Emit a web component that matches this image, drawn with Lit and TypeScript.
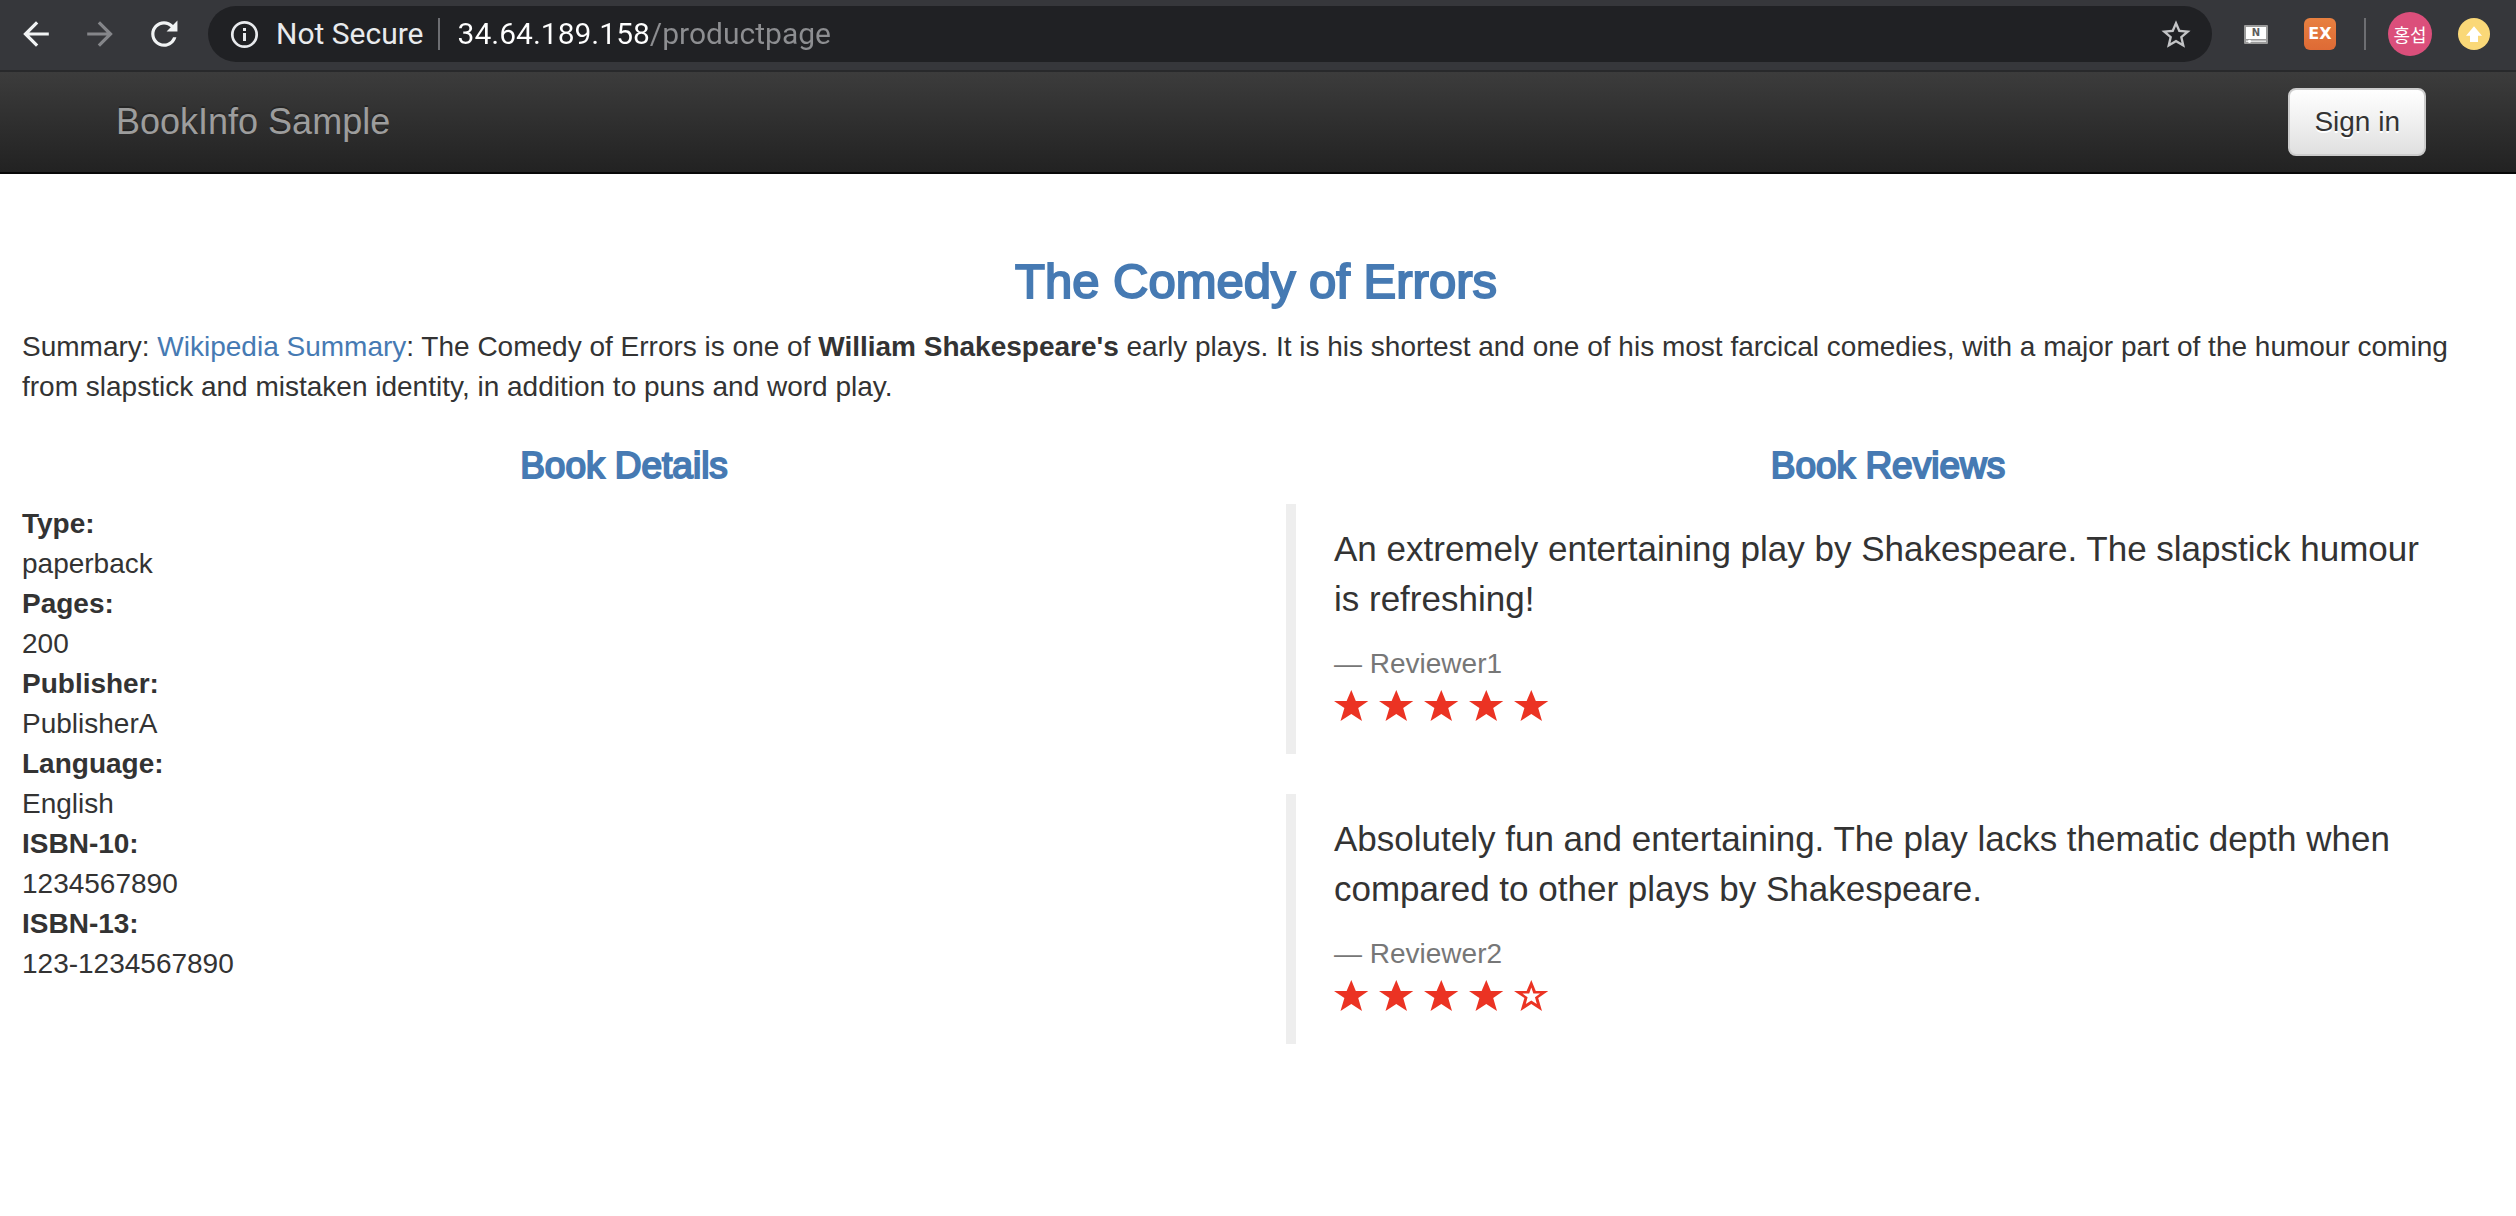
import { LitElement, html, svg, css } from "lit";
import { customElement, property } from "lit/decorators.js";

const details: [string, string][] = [
  ["Type:", "paperback"],
  ["Pages:", "200"],
  ["Publisher:", "PublisherA"],
  ["Language:", "English"],
  ["ISBN-10:", "1234567890"],
  ["ISBN-13:", "123-1234567890"],
];

const reviews = [
  {
    text: "An extremely entertaining play by Shakespeare. The slapstick humour is refreshing!",
    author: "Reviewer1",
    stars: 5,
  },
  {
    text: "Absolutely fun and entertaining. The play lacks thematic depth when compared to other plays by Shakespeare.",
    author: "Reviewer2",
    stars: 4,
  },
];

@customElement("browser-toolbar")
class BrowserToolbar extends LitElement {
  static styles = css`
    :host {
      display: block;
    }
    .bar {
      display: flex;
      align-items: center;
      height: 68px;
      padding: 0 26px 2px 20px;
      background: #36373b;
      border-bottom: 2px solid #28292b;
      font-family: Roboto, "Liberation Sans", sans-serif;
    }
    button {
      display: flex;
      align-items: center;
      justify-content: center;
      flex: none;
      padding: 0;
      border: 0;
      background: none;
    }
    svg {
      display: block;
    }
    .nav {
      display: flex;
      gap: 32px;
      margin-right: 28px;
      fill: #f1f3f4;
    }
    .nav button:disabled {
      fill: #85868a;
    }
    .pill {
      display: flex;
      align-items: center;
      flex: 1;
      min-width: 0;
      height: 56px;
      padding: 0 20px;
      border-radius: 28px;
      background: #202124;
    }
    .security {
      display: flex;
      align-items: center;
      gap: 16px;
      color: #e8eaed;
      font: inherit;
      font-size: 30px;
      line-height: 32px;
    }
    .divider {
      width: 2px;
      height: 32px;
      background: #6d6e72;
    }
    .pill .divider {
      margin: 0 18px 0 14px;
    }
    .address {
      flex: 1;
      min-width: 0;
      padding: 0;
      border: 0;
      outline: 0;
      color: #fff;
      font: inherit;
      font-size: 30px;
      line-height: 32px;
      background: linear-gradient(90deg, #fff 192px, #8d8e91 192px);
      -webkit-background-clip: text;
      background-clip: text;
      -webkit-text-fill-color: transparent;
    }
    .bookmark {
      fill: #c3c4c6;
    }
    .extensions {
      display: flex;
      gap: 32px;
      margin: 0 28px;
    }
    .n-label {
      fill: #5d5d5d;
      font: bold 10px "DejaVu Sans", sans-serif;
      text-anchor: middle;
    }
    .ex {
      width: 32px;
      height: 32px;
      border-radius: 6px;
      background: linear-gradient(#e88040, #de6a35);
      color: #fff;
      font: bold 16px/32px "DejaVu Sans", sans-serif;
    }
    .avatar {
      width: 44px;
      height: 44px;
      margin: 0 26px 0 22px;
      border-radius: 22px;
      background: #db4f7b;
      color: #fff;
      font: 18px/24px "Noto Sans CJK KR", sans-serif;
      white-space: nowrap;
    }
  `;

  render() {
    return html`
      <header class="bar">
        <div class="nav">
          <button aria-label="Back">
            <svg width="32" height="32" viewBox="2 2 20 20">
              <path d="M20 11H7.83l5.59-5.59L12 4l-8 8 8 8 1.41-1.41L7.83 13H20v-2z" />
            </svg>
          </button>
          <button aria-label="Forward" disabled>
            <svg width="32" height="32" viewBox="2 2 20 20">
              <path d="M12 4l-1.41 1.41L16.17 11H4v2h12.17l-5.58 5.59L12 20l8-8z" />
            </svg>
          </button>
          <button aria-label="Reload">
            <svg width="32" height="32" viewBox="2 2 20 20">
              <path
                d="M17.65 6.35C16.2 4.9 14.21 4 12 4c-4.42 0-7.99 3.58-7.99 8s3.57 8 7.99 8c3.73 0 6.84-2.55 7.73-6h-2.08c-.82 2.33-3.04 4-5.65 4-3.31 0-6-2.69-6-6s2.69-6 6-6c1.66 0 3.14.69 4.22 1.78L13.6 10.4H20.4V3.6l-2.75 2.75z"
              />
            </svg>
          </button>
        </div>
        <div class="pill">
          <button class="security">
            <svg width="32" height="32" viewBox="0 0 32 32" fill="#e8eaed">
              <circle cx="16.5" cy="16.5" r="12.2" fill="none" stroke="#e8eaed" stroke-width="2.7" />
              <rect x="15" y="10" width="3" height="3" />
              <rect x="15" y="15" width="3" height="8" />
            </svg>
            <span>Not Secure</span>
          </button>
          <span class="divider"></span>
          <input class="address" type="text" aria-label="Address" value="34.64.189.158/productpage" />
          <button class="bookmark" aria-label="Bookmark">
            <svg width="32" height="32" viewBox="1 0.5 22 22">
              <path
                d="M22 9.24l-7.19-.62L12 2 9.19 8.63 2 9.24l5.46 4.73L5.82 21 12 17.27 18.18 21l-1.63-7.03L22 9.24zM12 15.4l-3.76 2.27 1-4.28-3.32-2.88 4.38-.38L12 6.1l1.71 4.04 4.38.38-3.32 2.88 1 4.28L12 15.4z"
              />
            </svg>
          </button>
        </div>
        <div class="extensions">
          <button aria-label="N extension">
            <svg width="32" height="32" viewBox="0 0 32 32">
              <rect x="4" y="7" width="24" height="19" rx="1" fill="#9b9b9b" />
              <rect x="6" y="9" width="20" height="12" fill="#fff" />
              <rect x="6" y="22.5" width="20" height="1.5" fill="#e3e3e3" />
              <circle cx="9.5" cy="23.3" r="1.6" fill="#fff" />
              <text class="n-label" x="16" y="18">N</text>
            </svg>
          </button>
          <button class="ex">EX</button>
        </div>
        <span class="divider"></span>
        <button class="avatar">홍섭</button>
        <button aria-label="Update">
          <svg width="32" height="32" viewBox="0 0 32 32">
            <circle cx="16" cy="16" r="16" fill="#fad878" />
            <path d="M16 8.3L24 17.8H20V24H12V17.8H8z" fill="#fff" />
          </svg>
        </button>
      </header>
    `;
  }
}

@customElement("star-rating")
class StarRating extends LitElement {
  @property({ type: Number }) value = 0;

  static styles = css`
    :host {
      display: block;
    }
    .stars {
      display: flex;
      gap: 10px;
      padding: 6px 0 9px;
      fill: #eb3323;
    }
    svg {
      display: block;
    }
  `;

  render() {
    const outer =
      "M17.3 0L21.8 11H34.3L24.2 17.9L28 31L17.3 24L6.5 31L10.4 17.9L0 11H12.6Z";
    const hole =
      "M17.3 7.6L15.2 13.6H8.5L13.6 17.3L11.8 24L17.3 20.4L22.8 24L21 17.3L26.1 13.6H19.4Z";
    return html`
      <div class="stars" role="img" aria-label="${this.value} of 5 stars">
        ${[1, 2, 3, 4, 5].map(
          (n) => html`
            <svg width="35" height="35" viewBox="0 0 35 35">
              ${svg`<path fill-rule="evenodd" d=${n <= this.value ? outer : outer + hole} />`}
            </svg>
          `
        )}
      </div>
    `;
  }
}

@customElement("app-root")
class AppRoot extends LitElement {
  static styles = css`
    :host {
      display: block;
      min-height: 100vh;
      background: #fff;
      color: #333;
      font: 28px/40px "Liberation Sans", Arial, sans-serif;
    }
    a {
      color: #467ab3;
      text-decoration: none;
    }
    .navbar {
      display: flex;
      align-items: center;
      justify-content: space-between;
      height: 100px;
      padding: 0 90px 0 116px;
      background: linear-gradient(#3c3c3c, #222);
      border-bottom: 2px solid #080808;
    }
    .brand {
      color: #9d9d9d;
      font-size: 36px;
      text-shadow: 0 -2px 0 rgba(0, 0, 0, 0.25);
    }
    .signin {
      padding: 12px 24px;
      border: 2px solid #ccc;
      border-radius: 8px;
      background: linear-gradient(#fff, #e0e0e0);
      color: #333;
      font: inherit;
      text-shadow: 0 2px 0 #fff;
    }
    .intro {
      padding: 79px 26px 0 22px;
    }
    h1,
    h2 {
      margin: 0;
      color: #467ab3;
      font-weight: 500;
      text-align: center;
      -webkit-text-stroke: 2px #467ab3;
    }
    h1 {
      font-size: 49px;
      line-height: 56px;
    }
    h2 {
      margin-bottom: 18px;
      font-size: 37px;
      line-height: 40px;
    }
    .summary {
      margin: 18px 0 39px;
    }
    .columns {
      display: grid;
      grid-template-columns: 1fr 1fr;
      gap: 60px;
      padding: 0 26px 40px 22px;
    }
    dl,
    dd {
      margin: 0;
    }
    dt {
      font-weight: bold;
    }
    blockquote {
      margin: 0 0 40px;
      padding: 20px 40px 20px 38px;
      border-left: 10px solid #eee;
      font-size: 35px;
      line-height: 50px;
    }
    blockquote p {
      margin: 0 0 20px;
    }
    .author {
      display: block;
      color: #777;
      font-size: 28px;
      line-height: 40px;
    }
  `;

  render() {
    return html`
      <browser-toolbar></browser-toolbar>
      <nav class="navbar">
        <a class="brand" href="#">BookInfo Sample</a>
        <button class="signin">Sign in</button>
      </nav>
      <main>
        <section class="intro">
          <h1><a href="#">The Comedy of Errors</a></h1>
          <p class="summary">
            Summary: <a href="#">Wikipedia Summary</a>: The Comedy of Errors is one of
            <b>William Shakespeare's</b> early plays. It is his shortest and one of his most
            farcical comedies, with a major part of the humour coming from slapstick and mistaken
            identity, in addition to puns and word play.
          </p>
        </section>
        <div class="columns">
          <section>
            <h2>Book Details</h2>
            <dl>
              ${details.map(([term, value]) => html`<dt>${term}</dt><dd>${value}</dd>`)}
            </dl>
          </section>
          <section>
            <h2>Book Reviews</h2>
            ${reviews.map(
              (r) => html`
                <blockquote>
                  <p>${r.text}</p>
                  <small class="author">— ${r.author}</small>
                  <star-rating .value=${r.stars}></star-rating>
                </blockquote>
              `
            )}
          </section>
        </div>
      </main>
    `;
  }
}
